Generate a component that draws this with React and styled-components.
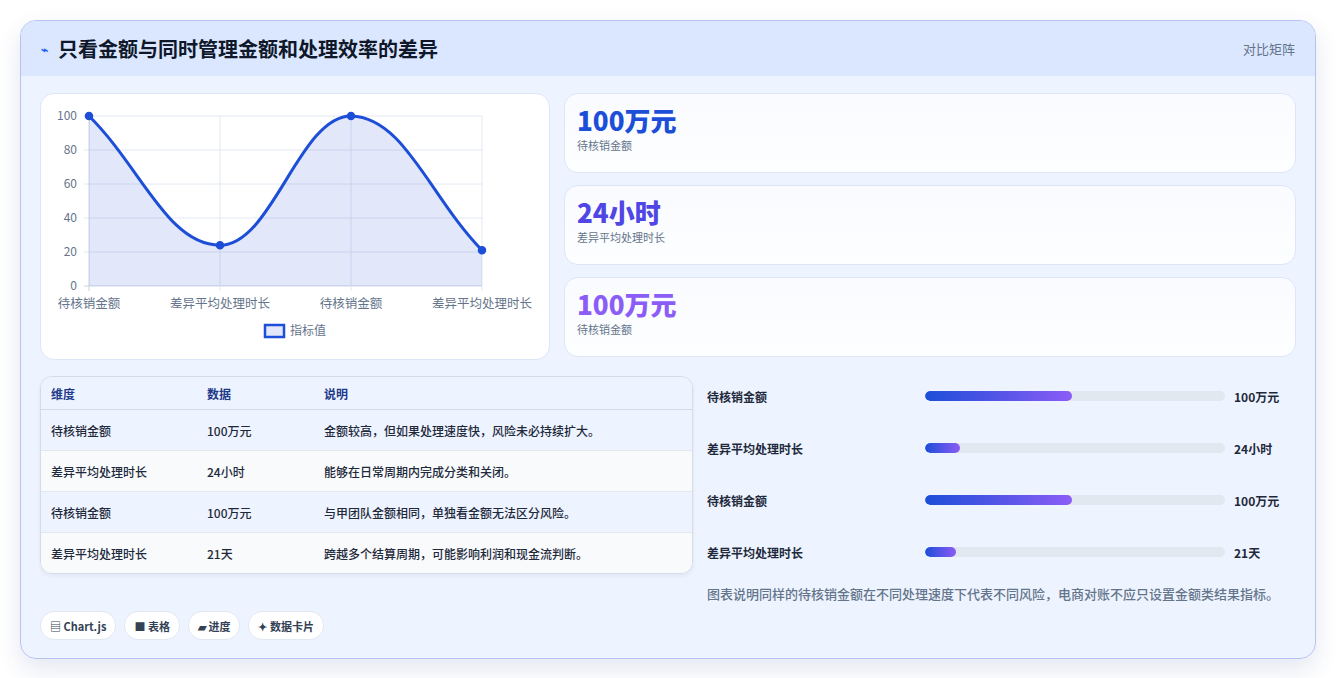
import React from "react";
import styled, { createGlobalStyle } from "styled-components";

const Global = createGlobalStyle`
  body { margin: 0; background: #fff; font-family: "Noto Sans CJK SC", "Noto Sans", sans-serif; }
`;
const Page = styled.div`padding: 20px 20px 20px 20px;`;
const Card = styled.div`
  border: 1px solid #b6c3f2; border-radius: 16px; overflow: hidden;
  background: linear-gradient(180deg, #edf3ff 0%, #eef4ff 100%);
  box-shadow: 0 10px 24px rgba(30,58,138,0.12);
`;
const Header = styled.div`
  height: 55px; background: #dbe7fe; display: flex; align-items: center; justify-content: space-between;
  padding: 0 20px;
`;
const Title = styled.h1`
  margin: 0; font-size: 20px; font-weight: 700; color: #0f172a; display: flex; align-items: center; gap: 10px;
`;
const Spark = styled.span`color: #2563eb; font-size: 12px;`;
const HeaderTag = styled.span`font-size: 13px; color: #64748b;`;
const Body = styled.div`padding: 17px 19px 18px 19px; display: flex; flex-direction: column; gap: 16px;`;
const Row = styled.div`display: grid; grid-template-columns: ${p => p.$cols}; gap: 14px;`;
const Panel = styled.div`
  background: #fff; border: 1px solid #dde6f7; border-radius: 14px;
`;
const ChartPanel = styled(Panel)`height: 265px; position: relative;`;
const Stats = styled.div`display: flex; flex-direction: column; gap: 12px;`;
const Stat = styled(Panel)`
  height: 80px; box-sizing: border-box; padding: 9px 12px;
  background: linear-gradient(180deg, #f9fbff, #fdfeff);
`;
const StatValue = styled.div`font-size: 26px; font-weight: 800; color: ${p => p.$c}; line-height: 34px;`;
const StatLabel = styled.div`font-size: 11px; color: #64748b; margin-top: 0px;`;
const LeftCol = styled.div`display: flex; flex-direction: column; gap: 37px;`;
const TableWrap = styled.div`
  border: 1px solid #d4dcec; border-radius: 12px; overflow: hidden;
  box-shadow: 0 2px 4px rgba(15,23,42,0.06);
`;
const Table = styled.table`width: 100%; border-collapse: collapse; font-size: 12px;`;
const Th = styled.th`
  text-align: left; font-weight: 700; color: #1e3a8a; padding: 0 10px; height: 32px; background: #eef4ff;
  border-bottom: 1px solid #d4dcec;
`;
const Tr = styled.tr`background: ${p => (p.$alt ? "#f8fafc" : "#eef4ff")};`;
const Td = styled.td`
  padding: 0 10px; height: 40px; color: #1e293b; font-weight: 500; border-bottom: ${p => (p.$last ? "none" : "1px solid #e2e8f0")};
`;
const Right = styled.div`display: flex; flex-direction: column; padding-top: 12px;`;
const Bar = styled.div`
  display: grid; grid-template-columns: 209px 300px 1fr; gap: 9px; align-items: center; height: 52px;
  font-size: 12px; font-weight: 600; color: #1e293b;
  &:first-child { margin-top: -18px; }
`;
const Track = styled.div`height: 10px; background: #e2e8f0; border-radius: 5px; overflow: hidden;`;
const Fill = styled.div`height: 100%; border-radius: 5px; background: linear-gradient(90deg, #1d4ed8, #8b5cf6);`;
const Caption = styled.p`margin: 6px 0 0; font-size: 13px; color: #64748b; font-weight: 500;`;
const Chips = styled.div`display: flex; gap: 8px;`;
const Chip = styled.span`
  background: #fff; border: 1px solid #e2e8f0; border-radius: 14px; padding: 0 9px; height: 27px;
  display: inline-flex; align-items: center; gap: 4px; font-size: 11px; font-weight: 700; color: #334155;
`;

const W = 510, H = 265, X0 = 48, X1 = 441, YT = 22, YB = 192;
const vals = [100, 24, 100, 21];
const labels = ["待核销金额", "差异平均处理时长", "待核销金额", "差异平均处理时长"];
const pts = vals.map((v, i) => [X0 + (i * (X1 - X0)) / 3, YB - (v / 100) * (YB - YT)]);
function curve() {
  const t = 0.4;
  const cps = pts.map((p, i) => {
    const prev = pts[i - 1] || p, next = pts[i + 1] || p;
    const d01 = Math.hypot(p[0] - prev[0], p[1] - prev[1]);
    const d12 = Math.hypot(next[0] - p[0], next[1] - p[1]);
    const s = d01 + d12 || 1;
    const fa = (t * d01) / s, fb = (t * d12) / s;
    return {
      a: [p[0] - fa * (next[0] - prev[0]), p[1] - fa * (next[1] - prev[1])],
      b: [p[0] + fb * (next[0] - prev[0]), p[1] + fb * (next[1] - prev[1])],
    };
  });
  let d = `M${pts[0][0]},${pts[0][1]}`;
  for (let i = 1; i < pts.length; i++) {
    const c1 = cps[i - 1].b, c2 = cps[i].a;
    d += ` C${c1[0]},${c1[1]} ${Math.min(c2[0], pts[i][0])},${Math.max(Math.min(c2[1], YB), YT)} ${pts[i][0]},${pts[i][1]}`;
  }
  return d;
}

function Chart() {
  const line = curve();
  return (
    <svg width={W} height={H} style={{ display: "block" }} fontFamily="'Noto Sans CJK SC', sans-serif">
      {[0, 20, 40, 60, 80, 100].map(v => {
        const y = YB - (v / 100) * (YB - YT);
        return (
          <g key={v}>
            <line x1={X0 - 5} x2={X1} y1={y} y2={y} stroke={v === 0 ? "#cbd5e1" : "#e2e8f0"} />
            <text x={X0 - 12} y={y + 4} fontSize="12" fill="#64748b" textAnchor="end">{v}</text>
          </g>
        );
      })}
      {pts.map((p, i) => (
        <g key={i}>
          <line x1={p[0]} x2={p[0]} y1={YT} y2={YB + 5} stroke={i === 0 ? "#cbd5e1" : "#e2e8f0"} />
          <text x={p[0]} y={YB + 22} fontSize="12.5" fill="#64748b" textAnchor="middle">{labels[i]}</text>
        </g>
      ))}
      <path d={`${line} L${X1},${YB} L${X0},${YB} Z`} fill="rgba(29,78,216,0.13)" />
      <path d={line} fill="none" stroke="#1d4ed8" strokeWidth="3" />
      {pts.map((p, i) => <circle key={i} cx={p[0]} cy={p[1]} r="3.5" fill="#1d4ed8" stroke="#1d4ed8" strokeWidth="1.5" />)}
      <rect x="224" y="231" width="19" height="12" fill="rgba(29,78,216,0.13)" stroke="#1d4ed8" strokeWidth="2.5" />
      <text x="249" y="241" fontSize="12" fill="#64748b">指标值</text>
    </svg>
  );
}

const rows = [
  ["待核销金额", "100万元", "金额较高，但如果处理速度快，风险未必持续扩大。"],
  ["差异平均处理时长", "24小时", "能够在日常周期内完成分类和关闭。"],
  ["待核销金额", "100万元", "与甲团队金额相同，单独看金额无法区分风险。"],
  ["差异平均处理时长", "21天", "跨越多个结算周期，可能影响利润和现金流判断。"],
];
const bars = [
  ["待核销金额", 49, "100万元"],
  ["差异平均处理时长", 11.5, "24小时"],
  ["待核销金额", 49, "100万元"],
  ["差异平均处理时长", 10.3, "21天"],
];

export default function App() {
  return (
    <Page>
      <Global />
      <Card>
        <Header>
          <Title><Spark>⌁</Spark>只看金额与同时管理金额和处理效率的差异</Title>
          <HeaderTag>对比矩阵</HeaderTag>
        </Header>
        <Body>
          <Row $cols="510px 1fr">
            <ChartPanel><Chart /></ChartPanel>
            <Stats>
              <Stat><StatValue $c="#1d4ed8">100万元</StatValue><StatLabel>待核销金额</StatLabel></Stat>
              <Stat><StatValue $c="#4f46e5">24小时</StatValue><StatLabel>差异平均处理时长</StatLabel></Stat>
              <Stat><StatValue $c="#8b5cf6">100万元</StatValue><StatLabel>待核销金额</StatLabel></Stat>
            </Stats>
          </Row>
          <Row $cols="653px 1fr">
            <LeftCol>
              <TableWrap>
                <Table>
                  <colgroup><col style={{ width: 156 }} /><col style={{ width: 117 }} /><col /></colgroup>
                  <thead><tr><Th>维度</Th><Th>数据</Th><Th>说明</Th></tr></thead>
                  <tbody>
                    {rows.map((r, i) => (
                      <Tr key={i} $alt={i % 2 === 1}>
                        {r.map((c, j) => <Td key={j} $last={i === 3}>{c}</Td>)}
                      </Tr>
                    ))}
                  </tbody>
                </Table>
              </TableWrap>
              <Chips>
                <Chip>▤ Chart.js</Chip>
                <Chip>■ 表格</Chip>
                <Chip>▰ 进度</Chip>
                <Chip>✦ 数据卡片</Chip>
              </Chips>
            </LeftCol>
            <Right>
              {bars.map((b, i) => (
                <Bar key={i}>
                  <span>{b[0]}</span>
                  <Track><Fill style={{ width: `${b[1]}%` }} /></Track>
                  <span>{b[2]}</span>
                </Bar>
              ))}
              <Caption>图表说明同样的待核销金额在不同处理速度下代表不同风险，电商对账不应只设置金额类结果指标。</Caption>
            </Right>
          </Row>
        </Body>
      </Card>
    </Page>
  );
}
